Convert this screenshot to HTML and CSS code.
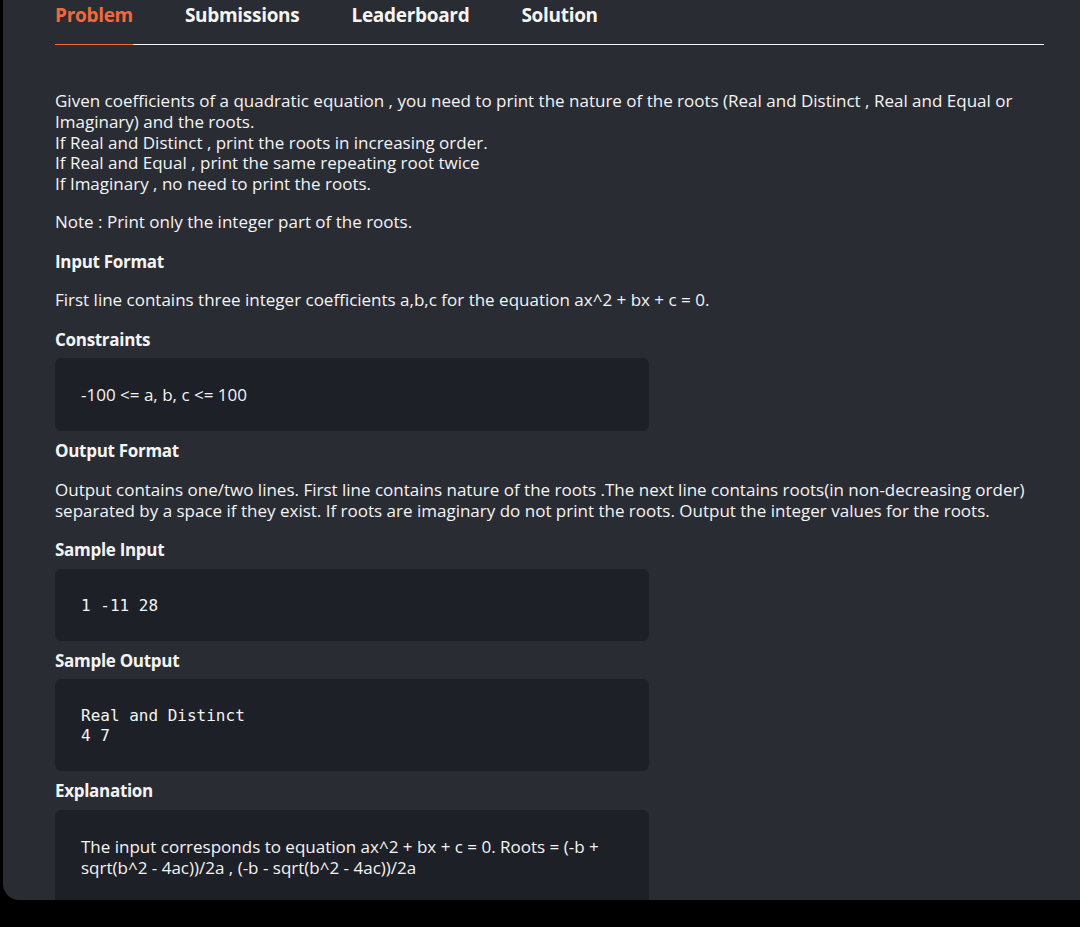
FILE: index.html
```html
<!DOCTYPE html>
<html>
<head>
<meta charset="utf-8">
<link rel="stylesheet" href="styles.css">
</head>
<body>
<div class="card">
  <nav class="tabs">
    <span class="tab active">Problem</span>
    <span class="tab">Submissions</span>
    <span class="tab">Leaderboard</span>
    <span class="tab">Solution</span>
  </nav>
  <div class="content">
    <p>Given coefficients of a quadratic equation , you need to print the nature of the roots (Real and Distinct , Real and Equal or Imaginary) and the roots.<br>If Real and Distinct , print the roots in increasing order.<br>If Real and Equal , print the same repeating root twice<br>If Imaginary , no need to print the roots.</p>
    <p>Note : Print only the integer part of the roots.</p>
    <h3>Input Format</h3>
    <p>First line contains three integer coefficients a,b,c for the equation ax^2 + bx + c = 0.</p>
    <h3 class="before-block">Constraints</h3>
    <div class="block">-100 &lt;= a, b, c &lt;= 100</div>
    <h3 class="after-block">Output Format</h3>
    <p class="out">Output contains one/two lines. First line contains nature of the roots .The next line contains roots(in non-decreasing order) separated by a space if they exist. If roots are imaginary do not print the roots. Output the integer values for the roots.</p>
    <h3 class="before-block">Sample Input</h3>
    <pre class="block code">1 -11 28</pre>
    <h3 class="after-block before-block">Sample Output</h3>
    <pre class="block code">Real and Distinct
4 7</pre>
    <h3 class="after-block before-block">Explanation</h3>
    <div class="block expl">The input corresponds to equation ax^2 + bx + c = 0. Roots = (-b + sqrt(b^2 - 4ac))/2a , (-b - sqrt(b^2 - 4ac))/2a<br><br><br></div>
  </div>
</div>
</body>
</html>
```
FILE: styles.css
```css
html, body {
  margin: 0;
  padding: 0;
  background: #000;
}
body {
  font-family: "Open Sans", "Noto Sans", sans-serif;
  color: #f4f4f4;
}
.card {
  margin-left: 3px;
  height: 900px;
  background: #2a2c34;
  border-bottom-left-radius: 16px;
  overflow: hidden;
  padding: 0 36px 0 52px;
  box-sizing: border-box;
}
.tabs {
  display: flex;
  gap: 52px;
  border-bottom: 1px solid #f4f4f4;
  height: 45px;
  box-sizing: border-box;
}
.tab {
  font-size: 19px;
  font-weight: 700;
  line-height: 30px;
  color: #f5f5f5;
  letter-spacing: -0.3px;
  height: 44px;
  box-sizing: border-box;
}
.tab.active {
  color: #f0683c;
  border-bottom: 1px solid #f0683c;
  height: 45px;
}
.content {
  padding-top: 46px;
}
p {
  margin: 0 0 17px;
  font-size: 17px;
  line-height: 20.8px;
}
p.out {
  line-height: 21px;
}
h3 {
  margin: 18px 0 17px;
  font-size: 17px;
  line-height: 22px;
  font-weight: 700;
  letter-spacing: -0.3px;
}
h3.before-block {
  margin-bottom: 7.5px;
}
h3.after-block {
  margin-top: 9px;
}
.block {
  width: 594px;
  box-sizing: border-box;
  background: #1e2028;
  border-radius: 6px;
  padding: 26px 26px;
  font-size: 17px;
  line-height: 21px;
  margin: 0;
}
.block.code {
  font-family: "DejaVu Sans Mono", monospace;
  font-size: 16px;
  line-height: 20px;
  padding-top: 27px;
  padding-bottom: 25px;
}
```
